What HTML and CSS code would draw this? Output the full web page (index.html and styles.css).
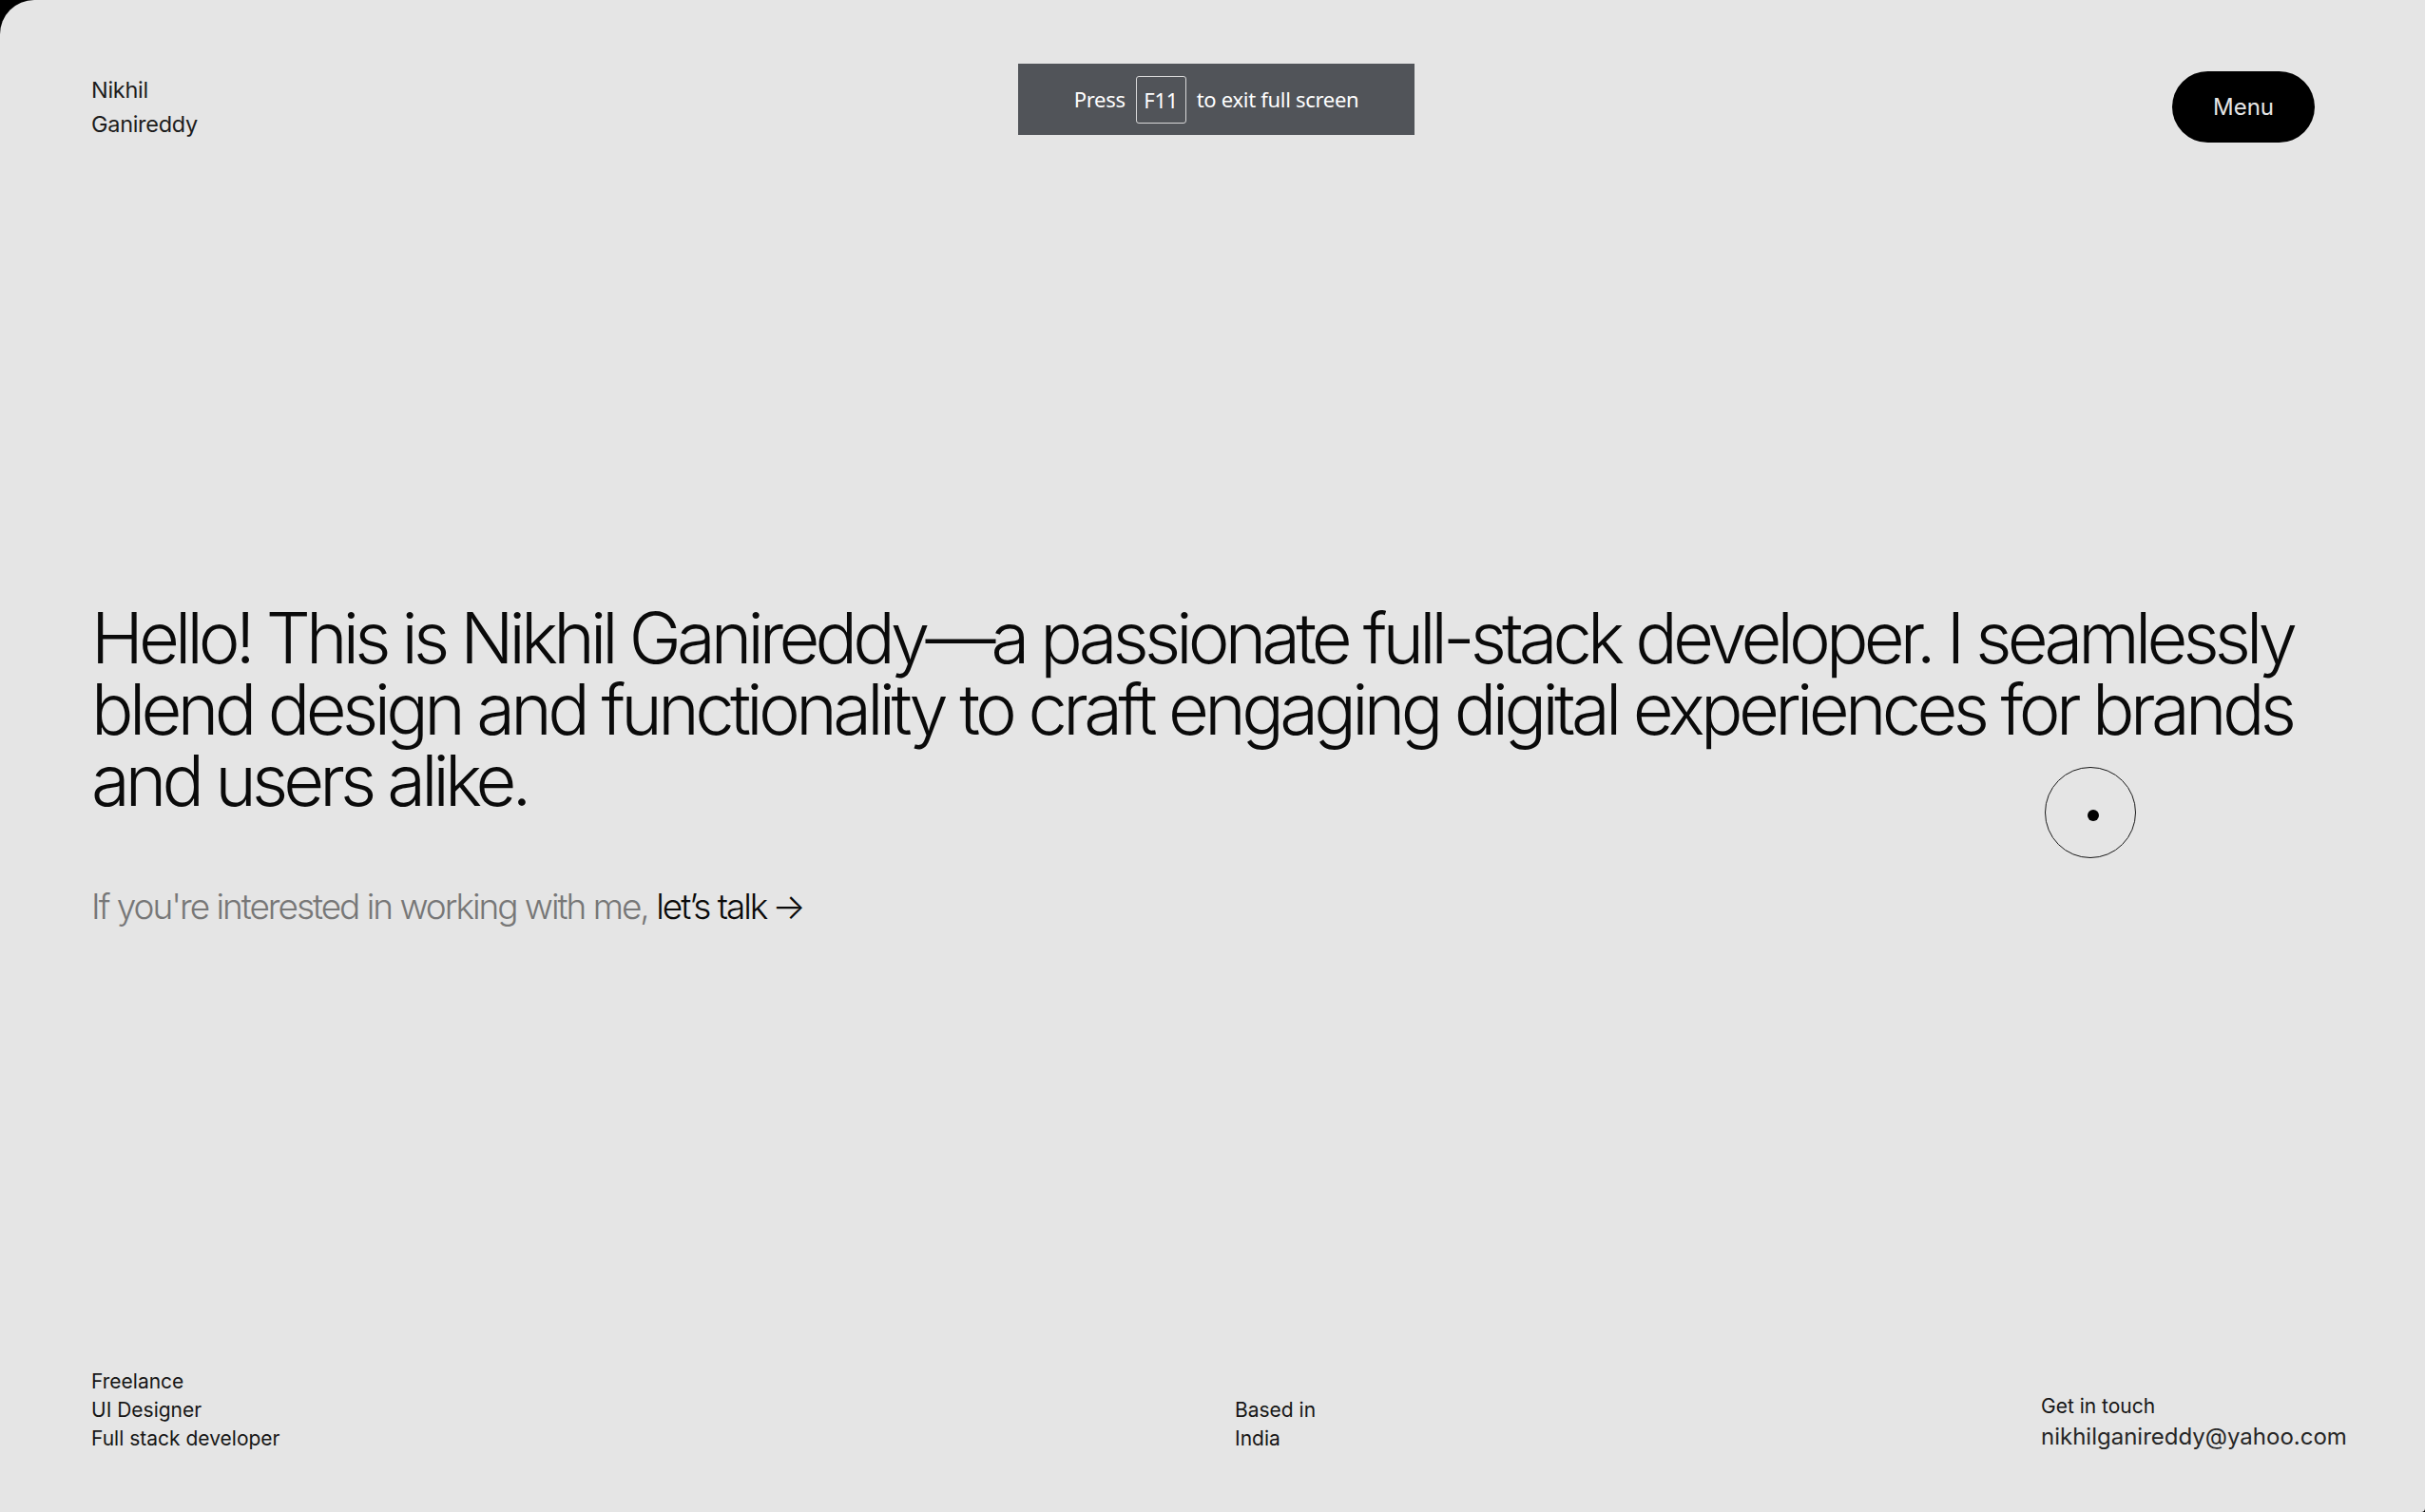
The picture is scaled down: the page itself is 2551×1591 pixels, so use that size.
FILE: index.html
```html
<!DOCTYPE html>
<html lang="en">
<head>
<meta charset="utf-8">
<title>Nikhil Ganireddy</title>
<link rel="stylesheet" href="styles.css">
</head>
<body>
<div class="page">
  <header class="header">
    <div class="brand">Nikhil<br>Ganireddy</div>
    <button class="menu-btn">Menu</button>
  </header>

  <main class="hero">
    <h1 class="headline">
      <span class="line">Hello! This is Nikhil Ganireddy—a passionate full-stack developer. I seamlessly</span>
      <span class="line line-loose">blend design and functionality to craft engaging digital experiences for brands</span>
      <span class="line">and users alike.</span>
    </h1>
    <p class="cta"><span class="cta-muted">If you're interested in working with me,</span> <a class="cta-link" href="#">let’s talk<span class="arrow">→</span></a></p>
  </main>

  <footer class="footer">
    <div class="foot-col">Freelance<br>UI Designer<br>Full stack developer</div>
    <div class="foot-col">Based in<br>India</div>
    <div class="foot-col contact">
      <span class="contact-label">Get in touch</span>
      <a class="contact-mail" href="#">nikhilganireddy@yahoo.com</a>
    </div>
  </footer>

  <div class="cursor-ring"></div>
  <div class="cursor-dot"></div>

  <div class="fs-toast">
    <span>Press</span>
    <span class="key">F11</span>
    <span>to exit full screen</span>
  </div>
</div>
</body>
</html>
```

FILE: styles.css
```css
* { box-sizing: border-box; }

html, body {
  margin: 0;
  padding: 0;
  background: #000;
}

.page {
  position: relative;
  height: 1591px;
  background: #e5e5e5;
  border-top-left-radius: 36px;
  border-bottom-right-radius: 4px;
  display: flex;
  flex-direction: column;
  padding: 0 96px;
  font-family: Inter, "Liberation Sans", sans-serif;
  color: #111;
  overflow: hidden;
}

.header {
  display: flex;
  justify-content: space-between;
  align-items: flex-start;
  padding-top: 77px;
}

.brand {
  font-size: 23.5px;
  line-height: 36px;
  color: #1c1c1c;
  letter-spacing: -0.3px;
}

.menu-btn {
  margin-top: -2px;
  margin-right: 20px;
  width: 150px;
  height: 75px;
  border: 0;
  border-radius: 38px;
  background: #000;
  color: #e5e5e5;
  font-family: Inter, "Liberation Sans", sans-serif;
  font-size: 24px;
  padding: 0;
}

.hero {
  margin-top: 484px;
}

.headline {
  margin: 0;
  font-weight: 300;
  font-size: 74px;
  line-height: 75px;
  letter-spacing: -0.0655em;
  color: #0a0a0a;
}

.line {
  display: block;
  white-space: nowrap;
}

.line-loose {
  letter-spacing: -0.0625em;
}

.cta {
  margin: 71px 0 0;
  font-weight: 300;
  font-size: 37px;
  line-height: 48px;
  letter-spacing: -0.055em;
}

.cta-muted { color: #777; }

.cta-link {
  color: #0a0a0a;
  text-decoration: none;
}

.arrow {
  margin-left: 6px;
}

.footer {
  margin-top: auto;
  padding-bottom: 62px;
  display: grid;
  grid-template-columns: 1203px 848px 1fr;
  align-items: end;
  font-size: 21px;
  line-height: 30px;
  color: #161616;
}

.contact {
  display: flex;
  flex-direction: column;
}

.contact-label { line-height: 30px; }

.contact-mail {
  font-size: 24px;
  line-height: 34px;
  color: #262626;
  text-decoration: none;
}

.cursor-ring {
  position: absolute;
  left: 2151px;
  top: 807px;
  width: 96px;
  height: 96px;
  border: 1.5px solid #1a1a1a;
  border-radius: 50%;
}

.cursor-dot {
  position: absolute;
  left: 2196px;
  top: 852px;
  width: 12px;
  height: 12px;
  border-radius: 50%;
  background: #000;
}

.fs-toast {
  position: absolute;
  left: 1071px;
  top: 67px;
  width: 417px;
  height: 75px;
  background: #515459;
  color: #fff;
  display: flex;
  align-items: center;
  justify-content: center;
  gap: 11px;
  padding-bottom: 2px;
  font-family: "Noto Sans", "Open Sans", sans-serif;
  font-size: 22px;
  letter-spacing: -0.3px;
}

.key {
  display: flex;
  align-items: center;
  justify-content: center;
  width: 53px;
  height: 50px;
  margin-top: 2px;
  border: 1.5px solid #d8d8d8;
  border-radius: 3px;
}
```
